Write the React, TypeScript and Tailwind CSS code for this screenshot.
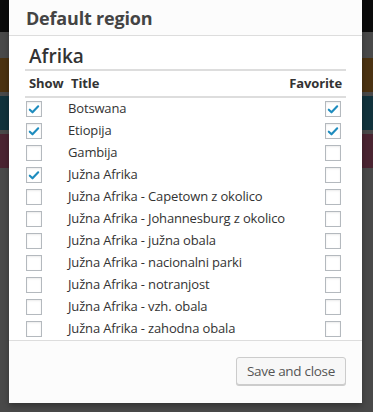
import { useState } from 'react';

const rows = [
  { title: 'Botswana', show: true, fav: true },
  { title: 'Etiopija', show: true, fav: true },
  { title: 'Gambija', show: false, fav: false },
  { title: 'Južna Afrika', show: true, fav: false },
  { title: 'Južna Afrika - Capetown z okolico', show: false, fav: false },
  { title: 'Južna Afrika - Johannesburg z okolico', show: false, fav: false },
  { title: 'Južna Afrika - južna obala', show: false, fav: false },
  { title: 'Južna Afrika - nacionalni parki', show: false, fav: false },
  { title: 'Južna Afrika - notranjost', show: false, fav: false },
  { title: 'Južna Afrika - vzh. obala', show: false, fav: false },
  { title: 'Južna Afrika - zahodna obala', show: false, fav: false },
];

function Check({ checked, onClick }: { checked: boolean; onClick: () => void }) {
  return (
    <button
      onClick={onClick}
      className="w-4 h-4 border border-[#b4b9be] bg-white shadow-[inset_0_1px_2px_rgba(0,0,0,0.08)] flex items-center justify-center"
    >
      {checked && (
        <svg viewBox="0 0 16 16" className="w-[15px] h-[15px]">
          <path d="M3.2 8.2 L6.3 11.2 L12.8 4.4" fill="none" stroke="#1e8cbe" strokeWidth="2.4" strokeLinecap="round" strokeLinejoin="round" />
        </svg>
      )}
    </button>
  );
}

export default function App() {
  const [data, setData] = useState(rows);

  const toggle = (i: number, key: 'show' | 'fav') =>
    setData((d) => d.map((r, j) => (j === i ? { ...r, [key]: !r[key] } : r)));

  return (
    <div className="relative w-[373px] h-[412px] bg-[#494949] overflow-hidden font-['Open_Sans',sans-serif]">
      {/* Dimmed page behind the dialog */}
      <div className="h-[32px] bg-[#0b0b0b]" />
      <div className="h-[26px]" />
      <div className="h-[34px] bg-[#4b3211]" />
      <div className="h-[4px]" />
      <div className="h-[34px] bg-[#11323c]" />
      <div className="h-[4px]" />
      <div className="h-[34px] bg-[#4a2431]" />

      {/* Dialog */}
      <div className="absolute left-[9px] top-0 w-[353px] h-[403px] bg-white flex flex-col shadow-[0_3px_6px_rgba(0,0,0,0.3)]">
        <div className="h-[37px] bg-[#fcfcfc] border-b border-[#dddddd] px-[17px] flex items-center">
          <h1 className="text-[18px] font-bold tracking-[-0.2px] text-[#444] leading-none">Default region</h1>
        </div>

        <div className="flex-1 px-4 pt-[8px]">
          <h2 className="text-[19px] font-semibold text-[#333] leading-[24px] px-[4px] pb-[1px] border-b-2 border-[#ddd]">
            Afrika
          </h2>
          <div className="flex items-center h-[27px] border-b-2 border-[#ddd] text-[13px] font-bold tracking-[-0.1px] text-[#333]">
            <div className="w-[46px] pl-[4px]">Show</div>
            <div className="flex-1">Title</div>
            <div className="pr-[4px]">Favorite</div>
          </div>
          <div>
            {data.map((r, i) => (
              <div key={r.title} className="flex items-center h-[22px] text-[13px] tracking-[-0.15px] text-[#333]">
                <div className="w-[43px] pl-[1px]">
                  <Check checked={r.show} onClick={() => toggle(i, 'show')} />
                </div>
                <div className="flex-1 whitespace-nowrap">{r.title}</div>
                <div className="pr-[5px]">
                  <Check checked={r.fav} onClick={() => toggle(i, 'fav')} />
                </div>
              </div>
            ))}
          </div>
        </div>

        <div className="h-[64px] bg-[#fcfcfc] border-t border-[#dddddd] flex justify-end items-start pt-[16px] pr-4">
          <button className="h-[28px] px-[10px] rounded-[3px] border border-[#cccccc] bg-[#f7f7f7] shadow-[0_1px_0_#cccccc] text-[13.5px] tracking-[-0.3px] text-[#555]">
            Save and close
          </button>
        </div>
      </div>
    </div>
  );
}
